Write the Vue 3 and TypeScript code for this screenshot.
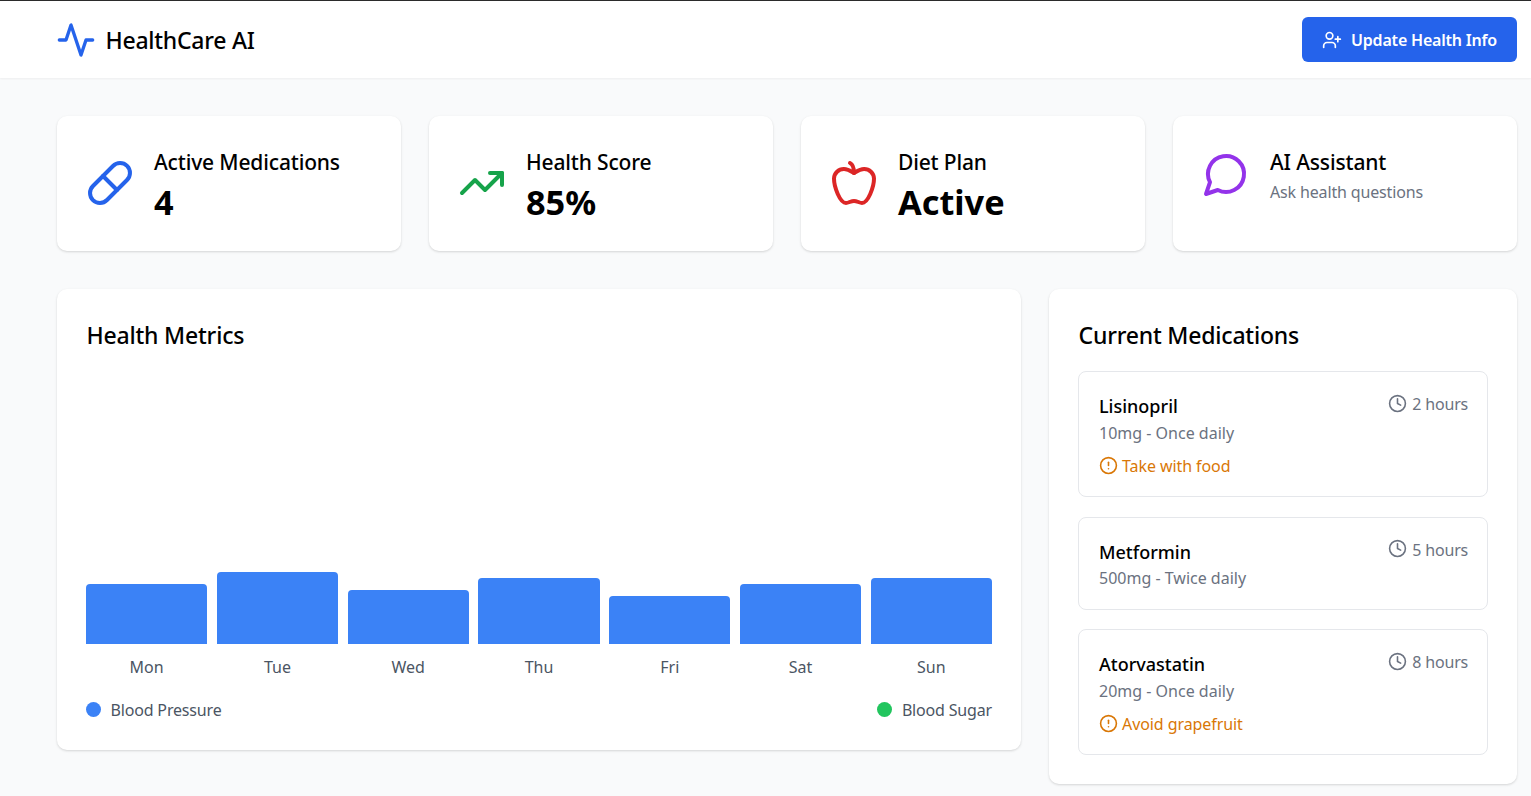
<script setup lang="ts">
const days = [
  { name: 'Mon', h: 60 }, { name: 'Tue', h: 72 }, { name: 'Wed', h: 54 }, { name: 'Thu', h: 66 },
  { name: 'Fri', h: 48 }, { name: 'Sat', h: 60 }, { name: 'Sun', h: 66 },
]
const meds = [
  { name: 'Lisinopril', dose: '10mg - Once daily', time: '2 hours', note: 'Take with food' },
  { name: 'Metformin', dose: '500mg - Twice daily', time: '5 hours', note: '' },
  { name: 'Atorvastatin', dose: '20mg - Once daily', time: '8 hours', note: 'Avoid grapefruit' },
]
</script>

<template>
  <div class="page">
    <header class="header">
      <div class="brand">
        <svg class="logo" viewBox="0 0 24 24" fill="none" stroke="currentColor" stroke-width="2" stroke-linecap="round" stroke-linejoin="round"><polyline points="22 12 18 12 15 21 9 3 6 12 2 12" /></svg>
        <span class="brand-name">HealthCare AI</span>
      </div>
      <button class="update">
        <svg class="update-icon" viewBox="0 0 24 24" fill="none" stroke="currentColor" stroke-width="2" stroke-linecap="round" stroke-linejoin="round"><path d="M16 21v-2a4 4 0 0 0-4-4H6a4 4 0 0 0-4 4v2" /><circle cx="9" cy="7" r="4" /><line x1="19" y1="8" x2="19" y2="14" /><line x1="22" y1="11" x2="16" y2="11" /></svg>
        <span>Update Health Info</span>
      </button>
    </header>

    <main class="main">
      <section class="stats">
        <div class="card stat">
          <svg class="stat-icon blue" viewBox="0 0 24 24" fill="none" stroke="currentColor" stroke-width="2" stroke-linecap="round" stroke-linejoin="round"><path d="m10.5 20.5 10-10a4.95 4.95 0 1 0-7-7l-10 10a4.95 4.95 0 1 0 7 7Z" /><path d="m8.5 8.5 7 7" /></svg>
          <div><div class="stat-label">Active Medications</div><div class="stat-value">4</div></div>
        </div>
        <div class="card stat">
          <svg class="stat-icon green" viewBox="0 0 24 24" fill="none" stroke="currentColor" stroke-width="2" stroke-linecap="round" stroke-linejoin="round"><polyline points="22 7 13.5 15.5 8.5 10.5 2 17" /><polyline points="16 7 22 7 22 13" /></svg>
          <div><div class="stat-label">Health Score</div><div class="stat-value">85%</div></div>
        </div>
        <div class="card stat">
          <svg class="stat-icon red" viewBox="0 0 24 24" fill="none" stroke="currentColor" stroke-width="2" stroke-linecap="round" stroke-linejoin="round"><path d="M12 20.94c1.5 0 2.75 1.06 4 1.06 3 0 6-8 6-12.22A4.91 4.91 0 0 0 17 5c-2.22 0-4 1.44-5 2-1-.56-2.78-2-5-2a4.9 4.9 0 0 0-5 4.78C2 14 5 22 8 22c1.25 0 2.5-1.06 4-1.06Z" /><path d="M10 2c1 .5 2 2 2 5" /></svg>
          <div><div class="stat-label">Diet Plan</div><div class="stat-value">Active</div></div>
        </div>
        <div class="card stat">
          <svg class="stat-icon stat-icon-short purple" viewBox="0 0 24 24" fill="none" stroke="currentColor" stroke-width="2" stroke-linecap="round" stroke-linejoin="round"><path d="M7.9 20A9 9 0 1 0 4 16.1L2 22Z" /></svg>
          <div><div class="stat-label">AI Assistant</div><div class="stat-sub">Ask health questions</div></div>
        </div>
      </section>

      <section class="columns">
        <div class="card panel metrics">
          <h2 class="panel-title">Health Metrics</h2>
          <div class="chart">
            <div v-for="d in days" :key="d.name" class="col">
              <div class="bar" :style="{ height: d.h + 'px' }"></div>
              <div class="day">{{ d.name }}</div>
            </div>
          </div>
          <div class="legend">
            <div class="legend-item"><span class="dot dot-blue"></span>Blood Pressure</div>
            <div class="legend-item"><span class="dot dot-green"></span>Blood Sugar</div>
          </div>
        </div>

        <div class="card panel meds">
          <h2 class="panel-title">Current Medications</h2>
          <div class="med-list">
            <div v-for="m in meds" :key="m.name" class="med">
              <div class="med-body">
                <div class="med-name">{{ m.name }}</div>
                <div class="med-dose">{{ m.dose }}</div>
                <div v-if="m.note" class="med-note">
                  <svg class="small-icon" viewBox="0 0 24 24" fill="none" stroke="currentColor" stroke-width="2" stroke-linecap="round" stroke-linejoin="round"><circle cx="12" cy="12" r="10" /><line x1="12" y1="8" x2="12" y2="12" /><line x1="12" y1="16" x2="12.01" y2="16" /></svg>
                  <span>{{ m.note }}</span>
                </div>
              </div>
              <div class="med-time">
                <svg class="small-icon clock" viewBox="0 0 24 24" fill="none" stroke="currentColor" stroke-width="2" stroke-linecap="round" stroke-linejoin="round"><circle cx="12" cy="12" r="10" /><polyline points="12 6 12 12 16 14" /></svg>
                <span>{{ m.time }}</span>
              </div>
            </div>
          </div>
        </div>
      </section>
    </main>
  </div>
</template>

<style>
html, body { margin: 0; background: #f9fafb; }
</style>

<style scoped>
.page {
  min-height: 796px;
  background: #f9fafb;
  color: #000;
  font-family: "Noto Sans", "Open Sans", sans-serif;
  border-top: 1px solid #2b2b2b;
  box-sizing: border-box;
}
.header {
  height: 77px;
  box-sizing: border-box;
  background: #fff;
  display: flex;
  align-items: center;
  justify-content: space-between;
  padding: 0 14px 0 56px;
  box-shadow: 0 1px 2px rgba(0, 0, 0, 0.05);
}
.brand { display: flex; align-items: center; gap: 9.5px; }
.logo { width: 40px; height: 40px; color: #2563eb; }
.brand-name { font-size: 23px; font-weight: 500; letter-spacing: -0.25px; }
.update {
  display: flex;
  align-items: center;
  gap: 9px;
  height: 45px;
  width: 215px;
  justify-content: center;
  border: 0;
  border-radius: 6px;
  background: #2563eb;
  color: #fff;
  font-family: inherit;
  font-size: 16px;
  font-weight: 600;
  letter-spacing: -0.2px;
}
.update-icon { width: 20px; height: 20px; }
.main { padding: 38px 14px 12px 57px; }
.stats { display: grid; grid-template-columns: repeat(4, 1fr); gap: 28px; }
.card {
  background: #fff;
  border-radius: 10px;
  box-shadow: 0 1px 3px rgba(0, 0, 0, 0.1), 0 1px 2px rgba(0, 0, 0, 0.06);
}
.stat {
  height: 135px;
  box-sizing: border-box;
  padding: 30px 29px;
  display: flex;
  align-items: flex-start;
  gap: 20px;
}
.stat-icon { width: 48px; height: 48px; flex: none; margin-top: 13px; }
.stat-icon-short { margin-top: 4px; }
.blue { color: #2563eb; }
.green { color: #16a34a; }
.red { color: #dc2626; }
.purple { color: #9333ea; }
.stat-label { font-size: 21px; font-weight: 500; line-height: 32px; letter-spacing: -0.15px; }
.stat-value { font-size: 34.3px; font-weight: 700; line-height: 48px; }
.stat-sub { font-size: 16px; line-height: 28px; color: #6b7280; letter-spacing: -0.15px; }
.columns { display: grid; grid-template-columns: repeat(3, 1fr); gap: 28px; margin-top: 38px; align-items: start; }
.panel { box-sizing: border-box; }
.metrics { grid-column: span 2; height: 461px; padding: 29px 29px 28px; display: flex; flex-direction: column; }
.meds { height: 495px; padding: 29px; }
.panel-title { margin: 0; padding-left: 0.5px; font-size: 23px; font-weight: 500; line-height: 34px; letter-spacing: -0.2px; }
.chart { flex: 1; display: flex; align-items: flex-end; gap: 9.5px; }
.col { flex: 1; display: flex; flex-direction: column; }
.bar { background: #3b82f6; border-radius: 4px 4px 0 0; }
.day { text-align: center; color: #4b5563; font-size: 16px; line-height: 24px; margin-top: 11px; }
.legend { display: flex; justify-content: space-between; margin-top: 19px; }
.legend-item { display: flex; align-items: center; gap: 9.5px; font-size: 16px; line-height: 24px; color: #4b5563; letter-spacing: -0.17px; }
.dot { width: 15px; height: 15px; border-radius: 50%; margin-bottom: 2px; }
.dot-blue { background: #3b82f6; }
.dot-green { background: #22c55e; }
.med-list { margin-top: 19px; display: flex; flex-direction: column; gap: 19.6px; }
.med {
  border: 1px solid #e5e7eb;
  border-radius: 8px;
  padding: 20px 19px 18.5px 20px;
  display: flex;
  justify-content: space-between;
  align-items: flex-start;
}
.med-name { font-size: 18px; font-weight: 500; line-height: 28.5px; }
.med-dose { font-size: 16px; line-height: 24px; color: #6b7280; }
.med-note { display: flex; align-items: center; gap: 4px; margin-top: 9px; font-size: 16px; line-height: 24px; color: #d97706; letter-spacing: -0.08px; }
.small-icon { width: 19px; height: 19px; flex: none; }
.clock { margin-bottom: 2px; }
.med-time { display: flex; align-items: center; gap: 5px; font-size: 16px; line-height: 24px; color: #6b7280; letter-spacing: -0.2px; }
</style>
